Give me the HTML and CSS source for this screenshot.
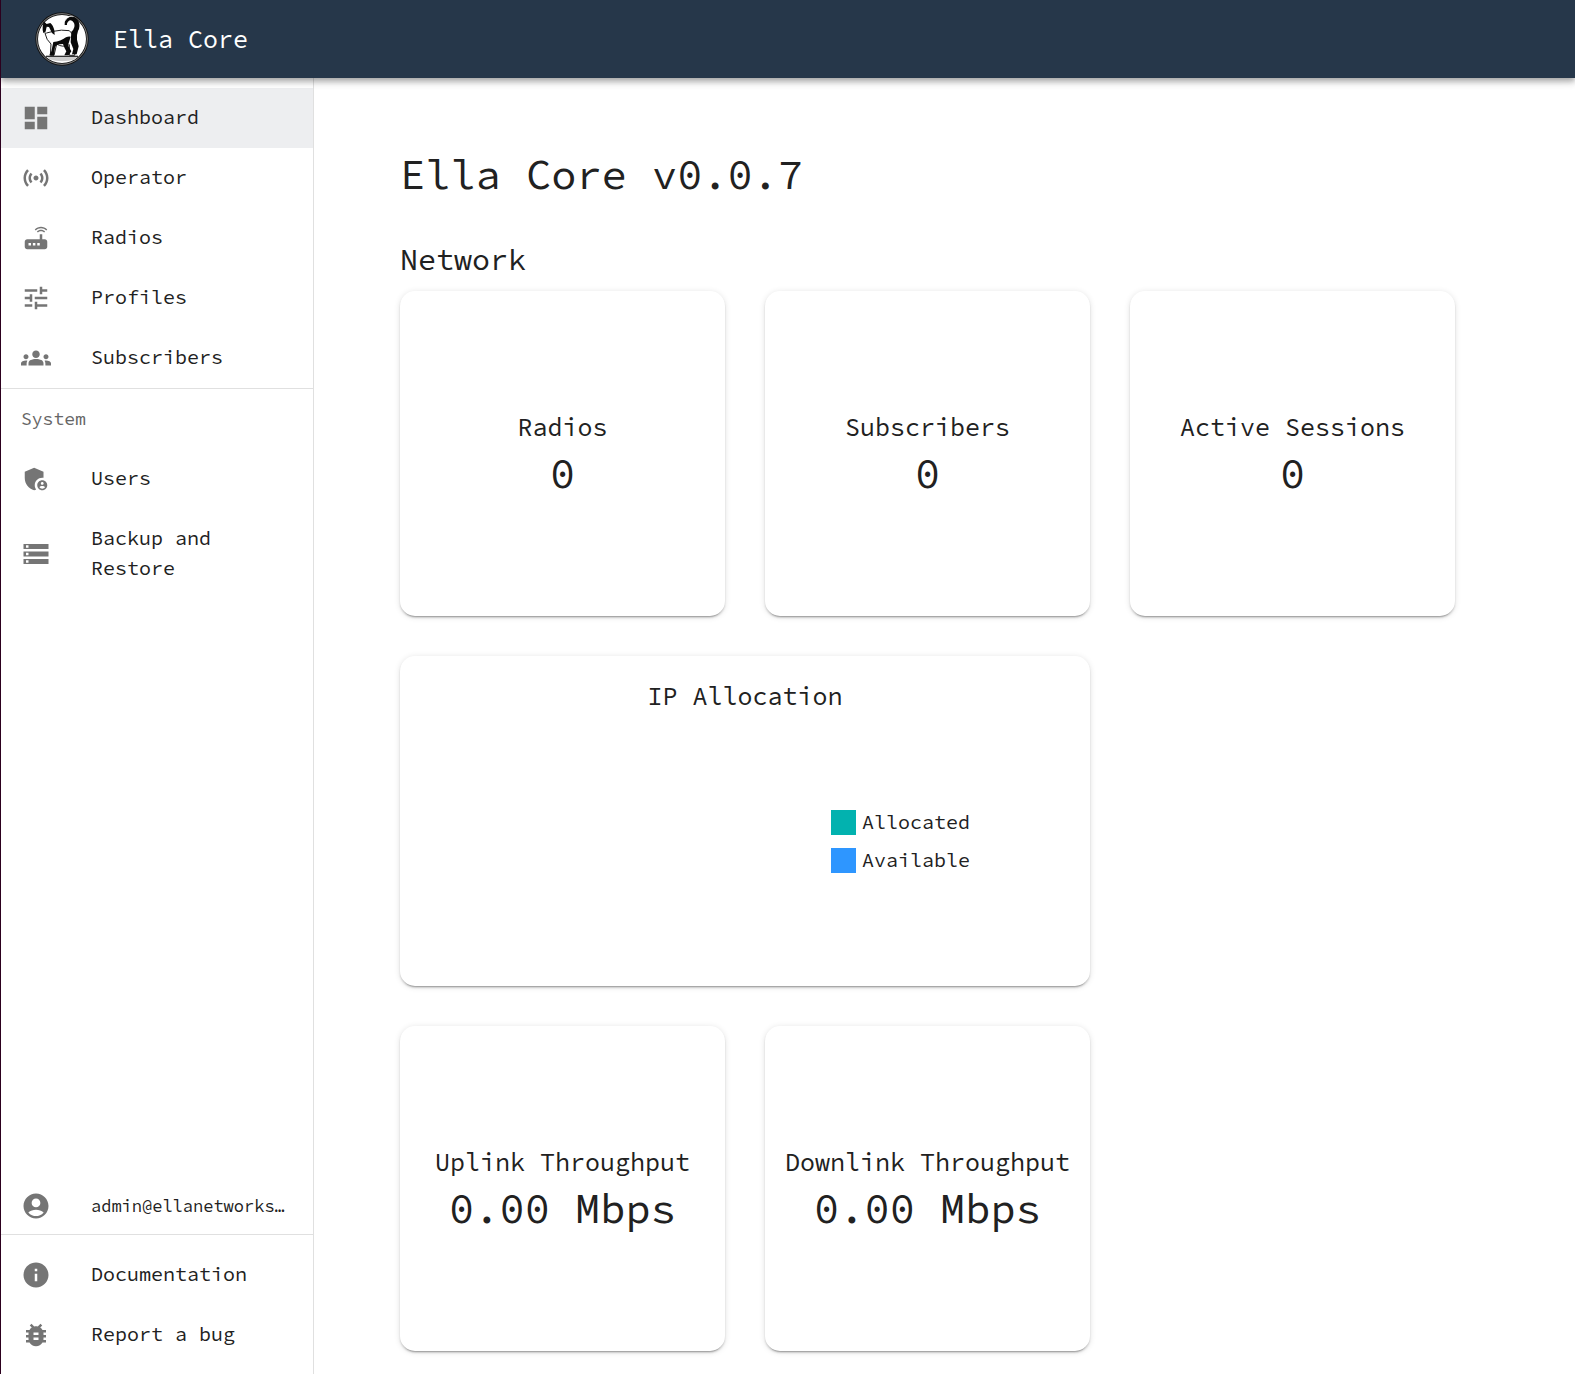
FILE: index.html
```html
<!DOCTYPE html>
<html lang="en">
<head>
<meta charset="utf-8">
<meta name="viewport" content="width=device-width, initial-scale=1">
<title>Ella Core</title>
<link rel="stylesheet" href="styles.css">
</head>
<body>
<header class="topbar">
  <svg class="logo" viewBox="17 18 162 162" aria-hidden="true">
    <circle cx="98" cy="99" r="80" fill="#111"/>
    <circle cx="98" cy="99" r="76" fill="none" stroke="#bbb" stroke-width="2"/>
    <circle cx="98" cy="99" r="72" fill="#fff"/>
    <path d="M52 150h94l-8 10q-40 12-78 0z" fill="#ccc"/>
    <path d="M50 149h96v4H50z" fill="#333"/>
    <path d="M72 76q24-6 48-2l20 22-4 52h-16V116q-20 10-38-2l-8 34H63l2-34q-14-12-18-32z" fill="#fff" stroke="#222" stroke-width="3"/>
    <path d="M40 62l3-16 9 8 11-3q8 6 12 22l1 14-8-6-9-18-7 2-4 14-6 2q-3-8-2-19z" fill="#0a0a0a"/>
    <path d="M52 62l7 1-2 12-6 5z" fill="#fff"/>
    <path d="M72 108q22-2 38-14 8-4 14-2l-8 26 10 18-8 12h-13l6-12q-6-10-10-22-20 0-24 10l-3 24H60l6-12z" fill="#0a0a0a"/>
    <path d="M106 57q-2-18 14-24 20-4 28 14 6 14-2 28-5 14-3 26l5 20-6 24h-14l4-16-8-20 2-32q14-12 8-26-8-14-18-4-4 4-3 10z" fill="#0a0a0a"/>
    <path d="M108 44l5-8 9-5 10 1" fill="none" stroke="#fff" stroke-width="2"/>
  </svg>
  <span class="brand">Ella Core</span>
</header>
<div class="shell">
  <aside class="sidebar">
    <nav class="menu" aria-label="Main">
      <a class="item item-active" href="#dashboard"><svg class="icon" viewBox="0 0 24 24"><path d="M3 13h8V3H3v10zm0 8h8v-6H3v6zm10 0h8V11h-8v10zm0-18v6h8V3h-8z"/></svg><span class="label">Dashboard</span></a>
      <a class="item" href="#operator"><svg class="icon" viewBox="0 0 24 24"><path d="M7.76 16.24C6.67 15.16 6 13.66 6 12s.67-3.16 1.76-4.24l1.42 1.42C8.45 9.9 8 10.9 8 12c0 1.1.45 2.1 1.17 2.83l-1.41 1.41zm8.48 0C17.33 15.16 18 13.66 18 12s-.67-3.16-1.76-4.24l-1.42 1.42C15.55 9.9 16 10.9 16 12c0 1.1-.45 2.1-1.17 2.83l1.41 1.41zM12 10c-1.1 0-2 .9-2 2s.9 2 2 2 2-.9 2-2-.9-2-2-2zm8 2c0 2.21-.9 4.21-2.35 5.65l1.42 1.42C20.88 17.26 22 14.76 22 12s-1.12-5.26-2.93-7.07l-1.42 1.42C19.1 7.79 20 9.79 20 12zM6.35 6.35 4.93 4.93C3.12 6.74 2 9.24 2 12s1.12 5.26 2.93 7.07l1.42-1.42C4.9 16.21 4 14.21 4 12s.9-4.21 2.35-5.65z"/></svg><span class="label">Operator</span></a>
      <a class="item" href="#radios"><svg class="icon" viewBox="0 0 24 24"><path d="M20.2 5.9l.8-.8C19.6 3.7 17.8 3 16 3s-3.6.7-5 2.1l.8.8C13 4.8 14.5 4.2 16 4.2s3 .6 4.2 1.7zm-.9.8c-.9-.9-2.1-1.4-3.3-1.4s-2.4.5-3.3 1.4l.8.8c.7-.7 1.6-1 2.5-1 .9 0 1.8.3 2.5 1l.8-.8zM19 13h-2V9h-2v4H5c-1.1 0-2 .9-2 2v4c0 1.1.9 2 2 2h14c1.1 0 2-.9 2-2v-4c0-1.1-.9-2-2-2zM8 18H6v-2h2v2zm3.5 0h-2v-2h2v2zm3.5 0h-2v-2h2v2z"/></svg><span class="label">Radios</span></a>
      <a class="item" href="#profiles"><svg class="icon" viewBox="0 0 24 24"><path d="M3 17v2h6v-2H3zM3 5v2h10V5H3zm10 16v-2h8v-2h-8v-2h-2v6h2zM7 9v2H3v2h4v2h2V9H7zm14 4v-2H11v2h10zm-6-4h2V7h4V5h-4V3h-2v6z"/></svg><span class="label">Profiles</span></a>
      <a class="item" href="#subscribers"><svg class="icon" viewBox="0 0 24 24"><path d="M12 12.75c1.63 0 3.07.39 4.24.9 1.08.48 1.76 1.56 1.76 2.73V18H6v-1.61c0-1.18.68-2.26 1.76-2.73 1.17-.52 2.61-.91 4.24-.91zM4 13c1.1 0 2-.9 2-2s-.9-2-2-2-2 .9-2 2 .9 2 2 2zm1.13 1.1c-.37-.06-.74-.1-1.13-.1-.99 0-1.93.21-2.78.58C.48 14.9 0 15.62 0 16.43V18h4.5v-1.61c0-.83.23-1.61.63-2.29zM20 13c1.1 0 2-.9 2-2s-.9-2-2-2-2 .9-2 2 .9 2 2 2zm4 3.43c0-.81-.48-1.53-1.22-1.85-.85-.37-1.79-.58-2.78-.58-.39 0-.76.04-1.13.1.4.68.63 1.46.63 2.29V18H24v-1.57zM12 6c1.66 0 3 1.34 3 3s-1.34 3-3 3-3-1.34-3-3 1.34-3 3-3z"/></svg><span class="label">Subscribers</span></a>
    </nav>
    <nav class="menu-system" aria-labelledby="system-heading">
      <h2 class="menu-heading" id="system-heading">System</h2>
      <a class="item" href="#users"><svg class="icon" viewBox="0 0 24 24"><path d="M17 11c.34 0 .67.04 1 .09V6.27L10.5 3 3 6.27v4.91c0 4.54 3.2 8.79 7.5 9.82.55-.13 1.08-.32 1.6-.55-.69-.98-1.1-2.17-1.1-3.45 0-3.31 2.69-6 6-6z"/><path d="M17 13c-2.21 0-4 1.79-4 4s1.79 4 4 4 4-1.79 4-4-1.79-4-4-4zm0 1.38c.62 0 1.12.51 1.12 1.12s-.51 1.12-1.12 1.12-1.12-.51-1.12-1.12.5-1.12 1.12-1.12zm0 5.37c-.93 0-1.74-.46-2.24-1.17.05-.72 1.51-1.08 2.24-1.08s2.19.36 2.24 1.08c-.5.71-1.31 1.17-2.24 1.17z"/></svg><span class="label">Users</span></a>
      <a class="item" href="#backup"><svg class="icon" viewBox="0 0 24 24"><path d="M2 20h20v-4H2v4zm2-3h2v2H4v-2zM2 4v4h20V4H2zm4 3H4V5h2v2zm-4 7h20v-4H2v4zm2-3h2v2H4v-2z"/></svg><span class="label">Backup and Restore</span></a>
    </nav>
    <button class="item account" type="button"><svg class="icon" viewBox="0 0 24 24"><path d="M12 2C6.48 2 2 6.48 2 12s4.48 10 10 10 10-4.48 10-10S17.52 2 12 2zm0 4c1.93 0 3.5 1.57 3.5 3.5S13.93 13 12 13s-3.5-1.57-3.5-3.5S10.07 6 12 6zm0 14c-2.03 0-4.43-.82-6.14-2.88C7.55 15.8 9.68 15 12 15s4.45.8 6.14 2.12C16.43 19.18 14.03 20 12 20z"/></svg><span class="email">admin@ellanetworks…</span></button>
    <nav class="menu-help" aria-label="Help">
      <a class="item" href="#documentation"><svg class="icon" viewBox="0 0 24 24"><path d="M12 2C6.48 2 2 6.48 2 12s4.48 10 10 10 10-4.48 10-10S17.52 2 12 2zm1 15h-2v-6h2v6zm0-8h-2V7h2v2z"/></svg><span class="label">Documentation</span></a>
      <a class="item" href="#bug"><svg class="icon" viewBox="0 0 24 24"><path d="M20 8h-2.81c-.45-.78-1.07-1.45-1.82-1.96L17 4.41 15.59 3l-2.17 2.17C12.96 5.06 12.49 5 12 5c-.49 0-.96.06-1.41.17L8.41 3 7 4.41l1.62 1.63C7.88 6.55 7.26 7.22 6.81 8H4v2h2.09c-.05.33-.09.66-.09 1v1H4v2h2v1c0 .34.04.67.09 1H4v2h2.81c1.04 1.79 2.97 3 5.19 3s4.15-1.21 5.19-3H20v-2h-2.09c.05-.33.09-.66.09-1v-1h2v-2h-2v-1c0-.34-.04-.67-.09-1H20V8zm-6 8h-4v-2h4v2zm0-4h-4v-2h4v2z"/></svg><span class="label">Report a bug</span></a>
    </nav>
  </aside>
  <main class="content">
    <h1 class="title">Ella Core v0.0.7</h1>
    <h2 class="section">Network</h2>
    <div class="cards">
      <section class="card stat"><h3 class="card-title">Radios</h3><p class="value">0</p></section>
      <section class="card stat"><h3 class="card-title">Subscribers</h3><p class="value">0</p></section>
      <section class="card stat"><h3 class="card-title">Active Sessions</h3><p class="value">0</p></section>
      <section class="card allocation">
        <h3 class="card-title">IP Allocation</h3>
        <div class="chart">
          <ul class="legend">
            <li class="key"><span class="swatch swatch-allocated"></span>Allocated</li>
            <li class="key"><span class="swatch swatch-available"></span>Available</li>
          </ul>
        </div>
      </section>
      <section class="card stat stat-first"><h3 class="card-title">Uplink Throughput</h3><p class="value">0.00 Mbps</p></section>
      <section class="card stat"><h3 class="card-title">Downlink Throughput</h3><p class="value">0.00 Mbps</p></section>
    </div>
  </main>
</div>
</body>
</html>
```
FILE: styles.css
```css
* {
  box-sizing: border-box;
}

body {
  display: flex;
  flex-direction: column;
  min-height: 100vh;
  margin: 0;
  border-left: 1px solid #2c001e;
  background: #fff;
  color: #212121;
  font-family: "Source Code Pro", "Liberation Mono", monospace;
  font-size: 20px;
  line-height: 30px;
}

h1, h2, h3, p, ul {
  margin: 0;
  padding: 0;
  font-weight: 400;
}

.topbar {
  position: relative;
  z-index: 1;
  display: flex;
  align-items: center;
  gap: 24px;
  height: 78px;
  padding: 0 34px 1px;
  background: #26374a;
  color: #fff;
  box-shadow: 0 2px 5px rgba(0, 0, 0, .2), 0 5px 6px rgba(0, 0, 0, .14), 0 1px 12px rgba(0, 0, 0, .12);
}

.logo {
  width: 54px;
  height: 54px;
}

.brand {
  font-size: 25px;
  line-height: 40px;
}

.shell {
  display: flex;
  flex: 1;
}

.sidebar {
  display: flex;
  flex: none;
  flex-direction: column;
  width: 313px;
  border-right: 1px solid #e0e0e0;
}

.menu {
  padding-top: 10px;
  border-bottom: 1px solid #e0e0e0;
}

.menu-heading {
  padding: 0 20px;
  color: #666;
  font-size: 18px;
  line-height: 60px;
}

.item {
  display: flex;
  align-items: center;
  gap: 40px;
  padding: 14px 20px;
  color: inherit;
  text-decoration: none;
}

.label {
  padding-bottom: 2px;
}

.item-active {
  background: #edeef0;
}

.icon {
  flex: none;
  width: 30px;
  height: 30px;
  fill: #757575;
}

.account {
  width: 100%;
  margin-top: auto;
  padding: 13px 20px;
  border: 0;
  background: none;
  font: inherit;
  font-size: 17px;
  text-align: left;
}

.email {
  white-space: nowrap;
}

.menu-help {
  padding: 10px 0 9px;
  border-top: 1px solid #e0e0e0;
}

.content {
  flex: 1;
  padding: 70px 120px 23px 86px;
}

.title {
  font-size: 42px;
  line-height: 52px;
}

.section {
  margin: 39px 0 12px;
  font-size: 30px;
  line-height: 40px;
}

.cards {
  display: grid;
  grid-template-columns: repeat(3, 1fr);
  gap: 40px;
}

.card {
  border-radius: 15px;
  background: #fff;
  text-align: center;
  box-shadow: 0 3px 1px -2px rgba(0, 0, 0, .2), 0 2px 2px rgba(0, 0, 0, .14), 0 1px 6px rgba(0, 0, 0, .12);
}

.stat {
  display: flex;
  flex-direction: column;
  justify-content: center;
  padding-bottom: 2px;
  aspect-ratio: 1;
}

.stat-first {
  grid-column: 1;
}

.card-title {
  font-size: 25px;
  line-height: 40px;
}

.value {
  font-size: 42px;
  line-height: 52px;
}

.allocation {
  grid-column: span 2;
  padding: 20px;
}

.chart {
  display: flex;
  align-items: center;
  justify-content: flex-end;
  height: 250px;
  padding-right: 100px;
}

.legend {
  display: grid;
  gap: 8px;
  list-style: none;
}

.key {
  display: flex;
  align-items: center;
  gap: 6px;
}

.swatch {
  width: 25px;
  height: 25px;
}

.swatch-allocated {
  background: #02b2af;
}

.swatch-available {
  background: #2e96ff;
}
```
